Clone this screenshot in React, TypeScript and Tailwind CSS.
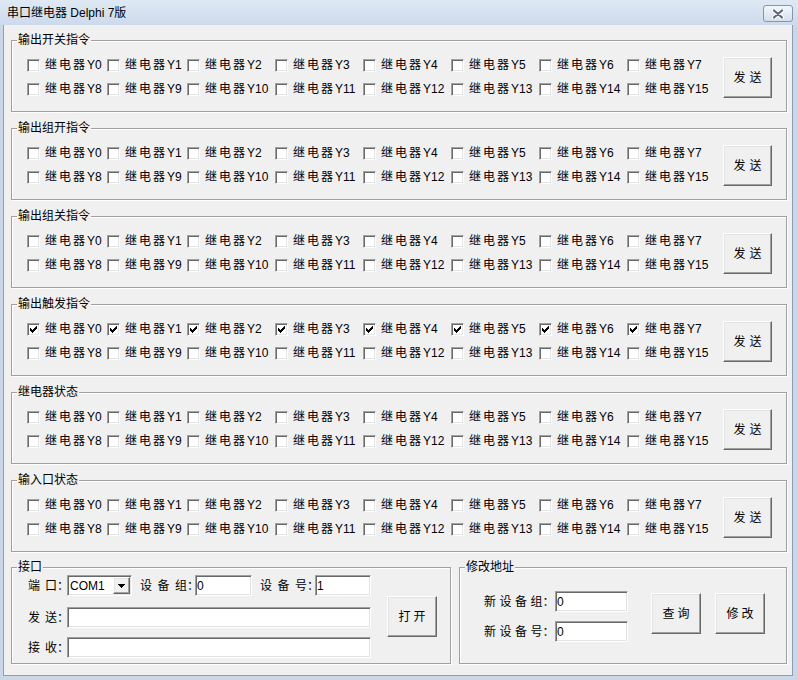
import React from "react";

const sunken =
  "bg-white border border-t-[#a0a0a0] border-l-[#a0a0a0] border-r-white border-b-white shadow-[inset_1px_1px_0_#696969,inset_-1px_-1px_0_#e3e3e3]";
const raised =
  "bg-[#f0f0f0] border border-t-white border-l-white border-r-[#696969] border-b-[#696969] shadow-[inset_-1px_-1px_0_#a0a0a0,inset_1px_1px_0_#e3e3e3]";

function Check() {
  const rows: [number, number, number][] = [
    [6, 0, 1],
    [5, 1, 2],
    [0, 2, 1],
    [4, 2, 3],
    [0, 3, 2],
    [3, 3, 3],
    [0, 4, 5],
    [1, 5, 3],
    [2, 6, 1],
  ];
  return (
    <svg width="7" height="7" viewBox="0 0 7 7" shapeRendering="crispEdges">
      {rows.map(([x, y, w], i) => (
        <rect key={i} x={x} y={y} width={w} height={1} fill="#000" />
      ))}
    </svg>
  );
}

function Box({ checked }: { checked?: boolean }) {
  return (
    <span className={`w-[13px] h-[13px] shrink-0 flex items-center justify-center ${sunken}`}>
      {checked && <Check />}
    </span>
  );
}

function Item({ n, checked }: { n: number; checked?: boolean }) {
  return (
    <div className="flex items-center h-[13px]">
      <Box checked={checked} />
      <span className="ml-[5px] text-[12px] leading-[13px] whitespace-nowrap">
        <span className="tracking-[2px]">继电器</span>Y{n}
      </span>
    </div>
  );
}

function Btn({
  children,
  className,
  track,
}: {
  children: React.ReactNode;
  className: string;
  track: string;
}) {
  return (
    <div className={`flex items-center justify-center shrink-0 text-[12px] ${raised} ${className}`}>
      <span className={track}>{children}</span>
    </div>
  );
}

function Group({
  title,
  className,
  children,
}: {
  title: string;
  className: string;
  children: React.ReactNode;
}) {
  return (
    <div
      className={`relative shrink-0 border border-[#a0a0a0] shadow-[1px_1px_0_#fff,inset_1px_1px_0_#fff] ${className}`}
    >
      <span className="absolute left-[5px] -top-[8px] px-[1px] bg-[#f0f0f0] text-[12px] leading-[14px] whitespace-nowrap">
        {title}
      </span>
      {children}
    </div>
  );
}

function RelayGroup({ title, checkedTop }: { title: string; checkedTop?: boolean }) {
  return (
    <Group title={title} className="w-[776px] h-[72px]">
      <div className="flex items-center pt-[16px] pl-[15px]">
        <div className="grid grid-cols-[80px_80px_88px_88px_88px_88px_88px_96px] gap-y-[11px]">
          {Array.from({ length: 16 }).map((_, i) => (
            <Item key={i} n={i} checked={checkedTop && i < 8} />
          ))}
        </div>
        <Btn className="w-[49px] h-[41px]" track="tracking-[4px] mr-[-4px]">
          发送
        </Btn>
      </div>
    </Group>
  );
}

function Input({ value, className }: { value?: string; className: string }) {
  return (
    <div className={`h-[21px] shrink-0 flex items-center pl-[1px] text-[12px] ${sunken} ${className}`}>
      {value}
    </div>
  );
}

function Label({
  head,
  last,
  track,
  className,
}: {
  head: string;
  last: string;
  track: string;
  className: string;
}) {
  return (
    <span className={`shrink-0 flex text-[12px] leading-[16px] whitespace-nowrap ${className}`}>
      <span className={track}>{head}</span>
      <span>{last}</span>
      <span className="tracking-[-6px]">：</span>
    </span>
  );
}

export default function App() {
  return (
    <div className="w-[798px] h-[680px] flex flex-col bg-[#c9d7e9] text-black font-['Liberation_Sans','Noto_Sans_CJK_SC',sans-serif] overflow-hidden">
      {/* title bar */}
      <div className="h-[25px] shrink-0 flex bg-linear-to-b from-[#dfe9f5] to-[#cddaeb]">
        <span className="ml-[7px] mt-[5px] text-[12px] leading-[16px] whitespace-nowrap">串口继电器 Delphi 7版</span>
        <div className="ml-auto mr-[5px] mt-[5px] w-[30px] h-[17px] rounded-[3px] border border-[#8595ab] bg-linear-to-b from-[#f2f6fb] to-[#d6e0ec] flex items-center justify-center">
          <svg width="14" height="10" viewBox="0 0 14 10">
            <path d="M3 1.5 L11 8.5 M11 1.5 L3 8.5" stroke="#ffffff" strokeWidth="4.2" strokeLinecap="round" />
            <path d="M3 1.5 L11 8.5 M11 1.5 L3 8.5" stroke="#5d6878" strokeWidth="2.2" strokeLinecap="round" />
          </svg>
        </div>
      </div>
      {/* client area */}
      <div className="flex-1 flex">
        <div className="ml-[3px] mr-[5px] mb-[4px] flex-1 bg-[#f0f0f0] border-l border-r border-b border-[#8e9eb4] pl-[7px] pt-[15px] flex flex-col">
          <div className="flex flex-col gap-[16px]">
            <RelayGroup title="输出开关指令" />
            <RelayGroup title="输出组开指令" />
            <RelayGroup title="输出组关指令" />
            <RelayGroup title="输出触发指令" checkedTop />
            <RelayGroup title="继电器状态" />
            <RelayGroup title="输入口状态" />
          </div>
          <div className="flex gap-[8px] mt-[15px]">
            <Group title="接口" className="w-[440px] h-[97px]">
              <div className="flex items-center pl-[16px] pt-[7px]">
                <div className="flex flex-col">
                  <div className="h-[21px] flex items-center">
                    <Label head="端" last="口" track="tracking-[5px]" className="w-[39px]" />
                    <div className={`w-[65px] h-[21px] p-[1px] flex items-center ${sunken}`}>
                      <span className="pl-[1px] text-[12px]">COM1</span>
                      <div className={`ml-auto w-[17px] h-[17px] flex items-center justify-center ${raised}`}>
                        <svg width="7" height="4" viewBox="0 0 7 4" shapeRendering="crispEdges">
                          <rect x="0" y="0" width="7" height="1" fill="#000" />
                          <rect x="1" y="1" width="5" height="1" fill="#000" />
                          <rect x="2" y="2" width="3" height="1" fill="#000" />
                          <rect x="3" y="3" width="1" height="1" fill="#000" />
                        </svg>
                      </div>
                    </div>
                    <Label head="设备" last="组" track="tracking-[5.5px]" className="ml-[8px] w-[55px]" />
                    <Input value="0" className="w-[57px]" />
                    <Label head="设备" last="号" track="tracking-[5.5px]" className="ml-[8px] w-[55px]" />
                    <Input value="1" className="w-[56px]" />
                  </div>
                  <div className="h-[21px] mt-[11px] flex items-center">
                    <Label head="发" last="送" track="tracking-[5px]" className="w-[39px]" />
                    <Input className="w-[304px]" />
                  </div>
                  <div className="h-[21px] mt-[9px] flex items-center">
                    <Label head="接" last="收" track="tracking-[5px]" className="w-[39px]" />
                    <Input className="w-[304px]" />
                  </div>
                </div>
                <Btn className="ml-[16px] w-[50px] h-[41px]" track="tracking-[3px] mr-[-3px]">
                  打开
                </Btn>
              </div>
            </Group>
            <Group title="修改地址" className="w-[328px] h-[97px]">
              <div className="flex items-start pl-[24px] pt-[23px]">
                <div className="flex flex-col">
                  <div className="h-[21px] flex items-center">
                    <Label head="新设备" last="组" track="tracking-[3.5px]" className="w-[71px]" />
                    <Input value="0" className="w-[73px]" />
                  </div>
                  <div className="h-[21px] mt-[9px] flex items-center">
                    <Label head="新设备" last="号" track="tracking-[3.5px]" className="w-[71px]" />
                    <Input value="0" className="w-[73px]" />
                  </div>
                </div>
                <Btn className="ml-[23px] mt-[2px] w-[50px] h-[41px]" track="tracking-[3px] mr-[-3px]">
                  查询
                </Btn>
                <Btn className="ml-[14px] mt-[2px] w-[50px] h-[41px]" track="tracking-[3px] mr-[-3px]">
                  修改
                </Btn>
              </div>
            </Group>
          </div>
        </div>
      </div>
    </div>
  );
}
